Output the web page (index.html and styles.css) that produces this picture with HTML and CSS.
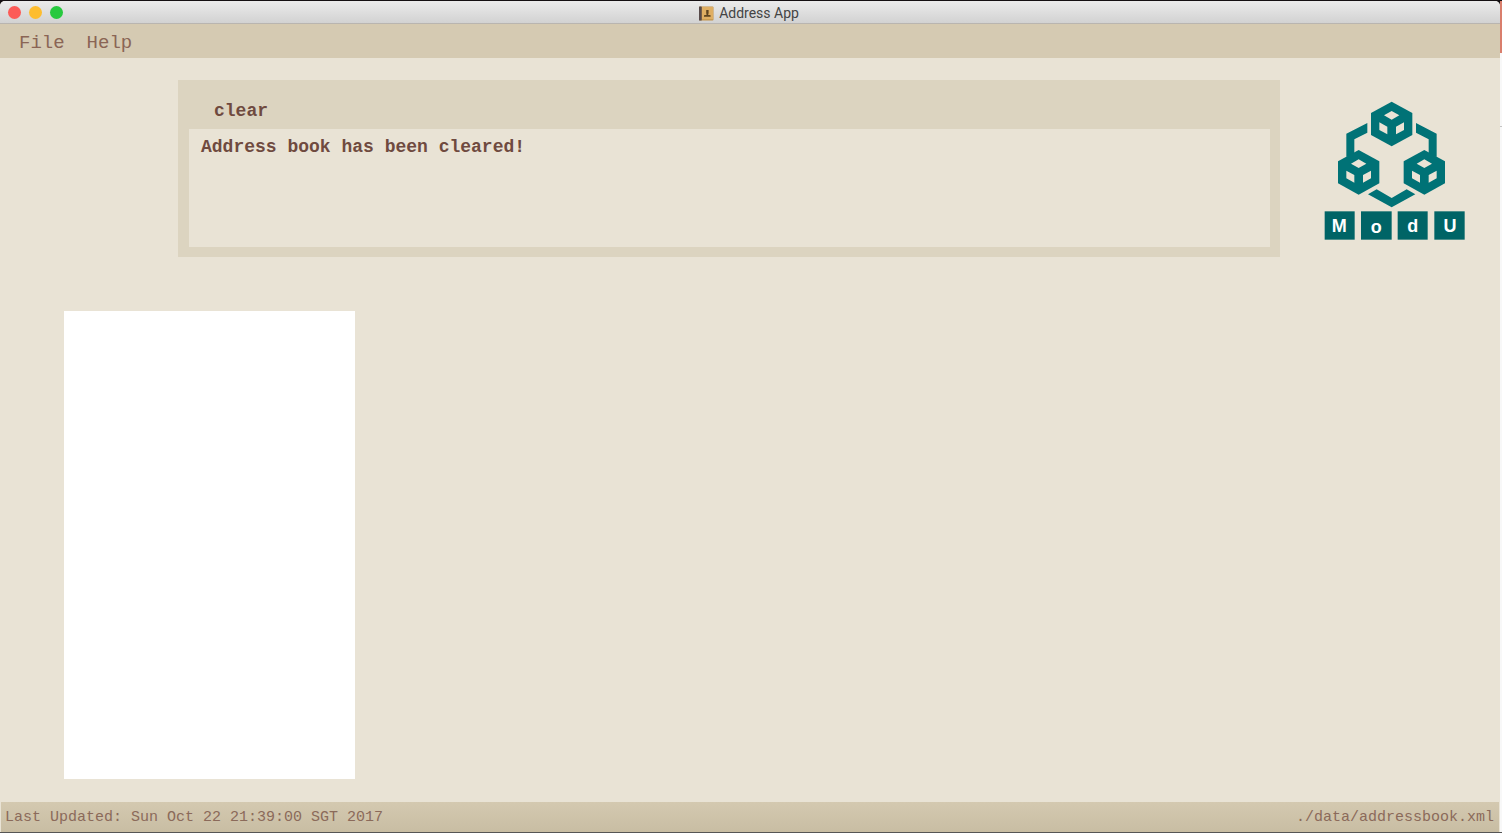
FILE: index.html
```
<!DOCTYPE html>
<html lang="en">
<head>
<meta charset="utf-8">
<title>Address App</title>
<link rel="stylesheet" href="styles.css">
</head>
<body>
<div class="desktop">
  <div class="window">
    <header class="titlebar">
      <div class="lights">
        <button class="light close" aria-label="Close"></button>
        <button class="light minimize" aria-label="Minimize"></button>
        <button class="light zoom" aria-label="Zoom"></button>
      </div>
      <div class="title">
        <svg class="app-icon" viewBox="0 0 15 15" aria-hidden="true">
          <rect x="0" y="0.5" width="14.5" height="14" rx="1" fill="#c1924a"/>
          <rect x="3" y="1" width="11" height="12.3" fill="#dfae62"/>
          <rect x="0" y="0.5" width="2.7" height="14" rx="0.6" fill="#574a4a"/>
          <path d="M7.200 4h2.400v3.200l-.6 1.500 2.600.6v1.500H5v-1.500l2.700-.6-.5-1.500z" fill="#5e4420"/>
        </svg>
        <span>Address App</span>
      </div>
    </header>
    <nav class="menubar">
      <button class="menu">File</button>
      <button class="menu">Help</button>
    </nav>
    <main class="content">
      <section class="top">
        <div class="command">
          <input class="command-input" type="text" value="clear" aria-label="Command">
          <textarea class="result" readonly aria-label="Result">Address book has been cleared!</textarea>
        </div>
        <div class="brand">
          <svg class="logo" viewBox="0 0 510 480" role="img" aria-label="ModU">
            <defs>
              <g id="cube">
                <path fill="#007276" d="M0-67 62-33V33L0 67-62 33V-33z"/>
                <path fill="#ebe4d6" d="M0-39 23-26 0-13-23-26zM-37-5-13 8V31L-37 18zM37-5 13 8V31L37 18z"/>
              </g>
            </defs>
            <g fill="#007276">
              <path d="M172 99V128L133 148V200H109V131z"/>
              <path d="M318 99V128L356 148V200H380V131z"/>
              <path d="M174 313 200 298 245 324 290 298 316 313 245 352z"/>
            </g>
            <use href="#cube" x="245" y="102"/>
            <use href="#cube" x="146" y="247"/>
            <use href="#cube" x="343" y="247"/>
            <g fill="#006466">
              <rect x="44" y="364" width="90" height="85"/>
              <rect x="153" y="364" width="92" height="85"/>
              <rect x="263" y="364" width="90" height="85"/>
              <rect x="373" y="364" width="91" height="85"/>
            </g>
            <g class="logo-text">
              <text x="88" y="426">M</text>
              <text x="199" y="428">o</text>
              <text x="308" y="426">d</text>
              <text x="420" y="426">U</text>
            </g>
          </svg>
        </div>
      </section>
      <section class="list" aria-label="Persons"></section>
    </main>
    <footer class="statusbar">
      <span>Last Updated: Sun Oct 22 21:39:00 SGT 2017</span>
      <span>./data/addressbook.xml</span>
    </footer>
  </div>
  <div class="behind"><div class="behind-accent"></div><div class="behind-page"></div></div>
</div>
</body>
</html>
```
FILE: styles.css
```
* { box-sizing: border-box; }
body {
  margin: 0;
  font-family: "Liberation Mono", "Courier New", monospace;
  background: #241c1c;
}
button, input, textarea { font: inherit; color: inherit; border: 0; margin: 0; padding: 0; background: none; outline: 0; }
.desktop { display: flex; min-height: 100vh; padding: 1px 0; background: linear-gradient(#140f12 50%, #555 50%); }
.window {
  flex: 1;
  display: flex;
  flex-direction: column;
  background: #e9e3d5;
  border-radius: 5px 5px 0 0;
  overflow: hidden;
}
.titlebar {
  display: grid;
  grid-template-columns: 1fr auto 1fr;
  align-items: center;
  height: 23px;
  padding: 0 10px 0 8px;
  background: linear-gradient(#ebebeb, #d2d2d2);
  border-bottom: 1px solid #b9b5b0;
}
.lights { display: flex; gap: 8px; }
.light { width: 13px; height: 13px; border-radius: 50%; }
.close { background: #fc5b57; }
.minimize { background: #fdbd2f; }
.zoom { background: #27c93f; }
.title {
  display: flex;
  align-items: center;
  gap: 5px;
  padding-top: 2px;
  font: 14px/20px Roboto, sans-serif;
  color: #444;
}
.app-icon { width: 15px; height: 15px; }
.menubar {
  display: flex;
  gap: 22px;
  height: 34px;
  padding: 0 19px;
  background: #d5cab2;
  color: #8a6555;
}
.menu { font-size: 19px; line-height: 34px; padding-top: 2px; }
.content { flex: 1; display: flex; flex-direction: column; padding: 22px 0 23px; }
.top { display: flex; }
.command {
  flex: 1;
  display: flex;
  flex-direction: column;
  margin-left: 178px;
  padding: 10px 10px 10px 11px;
  background: #dcd4c0;
  color: #6f4a3f;
  font-size: 18px;
  font-weight: bold;
}
.command-input { height: 39px; padding: 2px 25px 0; }
.result {
  height: 118px;
  padding: 7px 12px;
  line-height: 22px;
  background: #e9e3d5;
  resize: none;
}
.brand { width: 220px; padding: 10px 0 0 30px; }
.logo { display: block; width: 170px; height: 160px; }
.logo-text { fill: #fff; font: bold 54px "Liberation Sans", sans-serif; text-anchor: middle; }
.list { flex: 1; width: 291px; margin: 54px 0 0 64px; background: #fff; }
.statusbar {
  display: flex;
  justify-content: space-between;
  margin: 0 1px;
  padding: 2px 5px 0 4px;
  font-size: 15px;
  line-height: 28px;
  color: #8b6a5a;
  background: linear-gradient(#d4c9b0, #c8bda3);
}
.behind { width: 2px; display: flex; flex-direction: column; background: #f8f8f8; }
.behind-accent { height: 52px; background: #d97e6c; }
.behind-page { height: 74px; border-bottom: 1px solid #c4c4c4; }
```
